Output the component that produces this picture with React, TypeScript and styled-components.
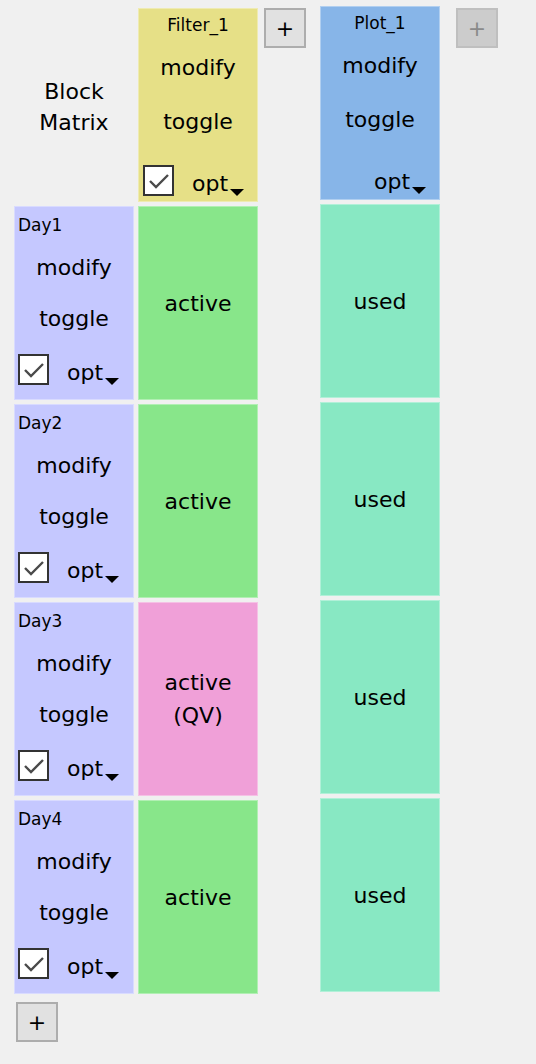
import React from 'react'
import styled, { createGlobalStyle } from 'styled-components'

const GlobalStyle = createGlobalStyle`
	html, body {
		margin: 0;
		padding: 0;
		background: #f0f0f0;
	}
	body {
		font-family: "DejaVu Sans", Verdana, sans-serif;
		color: #000;
	}
`

const Matrix = styled.div`
	display: flex;
	align-items: flex-start;
	padding: 8px 0 0 14px;
	height: 1064px;
	box-sizing: border-box;
`

const Column = styled.div<{ $left?: number; $shift?: number }>`
	display: flex;
	flex-direction: column;
	gap: 4px;
	width: 120px;
	margin-left: ${(p) => p.$left ?? 0}px;
	margin-top: ${(p) => p.$shift ?? 0}px;
`

const Corner = styled.div`
	height: 194px;
	box-sizing: border-box;
	padding-top: 4px;
	display: flex;
	align-items: center;
	justify-content: center;
	text-align: center;
	font-size: 22px;
	line-height: 31px;
`

const ControlCell = styled.div<{ $bg: string }>`
	height: 194px;
	box-sizing: border-box;
	background: ${(p) => p.$bg};
	border: 1px solid rgba(255, 255, 255, 0.35);
	display: flex;
	flex-direction: column;
`

const Title = styled.div<{ $row?: boolean }>`
	height: ${(p) => (p.$row ? 35 : 31)}px;
	display: flex;
	align-items: center;
	justify-content: ${(p) => (p.$row ? 'flex-start' : 'center')};
	padding-left: ${(p) => (p.$row ? 3 : 0)}px;
	font-size: 17px;
`

const Action = styled.div<{ $row?: boolean }>`
	height: ${(p) => (p.$row ? 51 : 54)}px;
	display: flex;
	align-items: center;
	justify-content: center;
	font-size: 22px;
`

const OptionRow = styled.div<{ $row?: boolean }>`
	display: flex;
	align-items: center;
	height: 31px;
	margin-top: ${(p) => (p.$row ? 10 : 17)}px;
	padding-left: ${(p) => (p.$row ? 3 : 4)}px;
`

const CheckBox = styled.div<{ $hidden?: boolean }>`
	width: 31px;
	height: 31px;
	box-sizing: border-box;
	border: 2px solid #333;
	background: #fff;
	display: flex;
	align-items: center;
	justify-content: center;
	visibility: ${(p) => (p.$hidden ? 'hidden' : 'visible')};
`

const Opt = styled.div`
	display: flex;
	align-items: center;
	margin-left: 18px;
	margin-top: 5px;
	font-size: 22px;
	svg {
		margin-left: 2px;
		margin-top: 18px;
	}
`

const StatusCell = styled.div<{ $bg: string }>`
	height: 194px;
	box-sizing: border-box;
	background: ${(p) => p.$bg};
	border: 1px solid rgba(255, 255, 255, 0.35);
	display: flex;
	align-items: center;
	justify-content: center;
	text-align: center;
	font-size: 22px;
	line-height: 33px;
`

const AddButton = styled.button<{ $left?: number; $top?: number }>`
	width: 42px;
	height: 40px;
	margin-left: ${(p) => p.$left ?? 0}px;
	margin-top: ${(p) => p.$top ?? 0}px;
	padding: 0;
	box-sizing: border-box;
	border: 2px solid #adadad;
	background: #e1e1e1;
	color: #000;
	font-family: "DejaVu Sans", Verdana, sans-serif;
	font-size: 22px;
	display: flex;
	align-items: center;
	justify-content: center;
	&:disabled {
		background: #cccccc;
		border-color: #bfbfbf;
		color: #8a8a8a;
	}
`

const Check = () => (
	<svg width="22" height="18" viewBox="0 0 22 18">
		<path d="M2 9 L8 15 L20 3" fill="none" stroke="#4a4a4a" strokeWidth="2.4" />
	</svg>
)

const Arrow = () => (
	<svg width="14" height="7" viewBox="0 0 14 7">
		<path d="M0 0 H14 L7 7 Z" fill="#000" />
	</svg>
)

interface ControlProps {
	title: string
	bg: string
	row?: boolean
	checkbox?: boolean
}

const Control = ({ title, bg, row, checkbox = true }: ControlProps) => (
	<ControlCell $bg={bg}>
		<Title $row={row}>{title}</Title>
		<Action $row={row}>modify</Action>
		<Action $row={row}>toggle</Action>
		<OptionRow $row={row}>
			<CheckBox $hidden={!checkbox}>
				<Check />
			</CheckBox>
			<Opt>
				opt
				<Arrow />
			</Opt>
		</OptionRow>
	</ControlCell>
)

const days = ['Day1', 'Day2', 'Day3', 'Day4']
const filterStates = [
	{ text: 'active', qv: false },
	{ text: 'active', qv: false },
	{ text: 'active', qv: true },
	{ text: 'active', qv: false },
]

const App = () => (
	<>
		<GlobalStyle />
		<Matrix>
			<Column>
				<Corner>
					Block
					<br />
					Matrix
				</Corner>
				{days.map((d) => (
					<Control key={d} title={d} bg="#c5c8ff" row />
				))}
				<AddButton $left={2} $top={4}>+</AddButton>
			</Column>
			<Column $left={4}>
				<Control title="Filter_1" bg="#e6e087" />
				{filterStates.map((s, i) => (
					<StatusCell key={i} $bg={s.qv ? '#f0a0d8' : '#88e68a'}>
						{s.qv ? (
							<>
								active
								<br />
								(QV)
							</>
						) : (
							s.text
						)}
					</StatusCell>
				))}
			</Column>
			<AddButton $left={6}>+</AddButton>
			<Column $left={14} $shift={-2}>
				<Control title="Plot_1" bg="#87b5e8" checkbox={false} />
				{days.map((d) => (
					<StatusCell key={d} $bg="#88e8c3">
						used
					</StatusCell>
				))}
			</Column>
			<AddButton $left={16} disabled>
				+
			</AddButton>
		</Matrix>
	</>
)

export default App
